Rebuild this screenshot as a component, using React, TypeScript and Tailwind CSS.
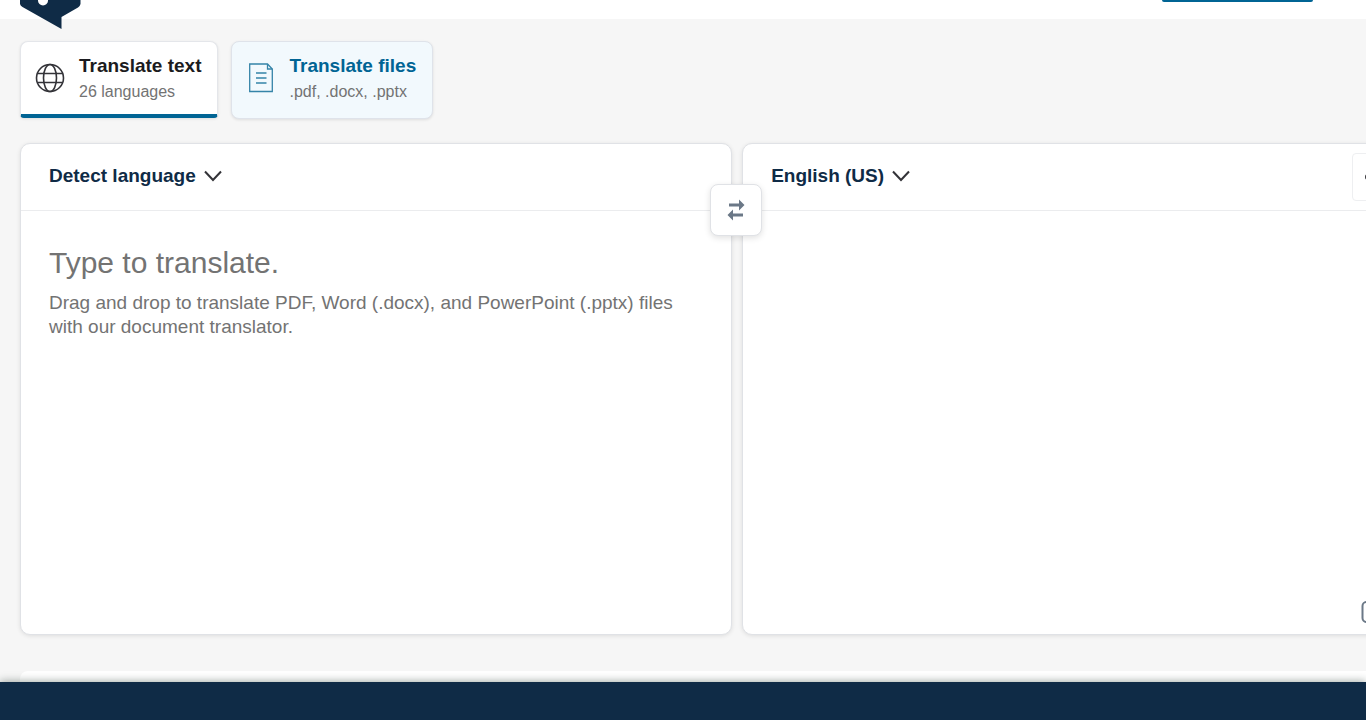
import type { ReactNode } from "react";

function Logo() {
  return (
    <a href="#home" aria-label="Home" className="block h-[30px] w-[62px]">
      <svg viewBox="0 0 62 30" width="62" height="30" aria-hidden="true">
        <path d="M0 0H60.500V4Q60 6 58 7.500L41.500 17V29L2.500 7Q0.500 6 0 4Z" fill="#0f2b46" />
        <circle cx="23" cy="0.500" r="5" fill="#fff" />
      </svg>
    </a>
  );
}

function GlobeIcon() {
  return (
    <svg width="30" height="30" viewBox="0 0 30 30" fill="none" stroke="#333338" strokeWidth="1.6" aria-hidden="true">
      <circle cx="15" cy="15" r="13.500" />
      <ellipse cx="15" cy="15" rx="6.500" ry="13.500" />
      <path d="M2.500 10.500H27.500M2.500 19.500H27.500" />
    </svg>
  );
}

function DocumentIcon() {
  return (
    <svg width="24" height="30" viewBox="0 0 24 30" fill="none" stroke="#3584a8" strokeWidth="1.3" aria-hidden="true">
      <path d="M0.700 1H18.500L23.300 6V28.500H0.700Z" />
      <path d="M18.500 1V6H23.300M7 10H17.500M7 15H17.500M7 20H17.500" />
    </svg>
  );
}

function Chevron() {
  return (
    <svg width="18" height="12" viewBox="0 0 18 12" fill="none" stroke="#333338" strokeWidth="2" aria-hidden="true">
      <path d="M1 1.500L9 10L17 1.500" />
    </svg>
  );
}

function SwapIcon() {
  return (
    <svg width="18" height="22" viewBox="0 0 18 22" fill="#6b7887" aria-hidden="true">
      <path d="M2 4.500H12V0.500L17.500 6L12 11.500V7.500H2Z" />
      <path d="M16 14.500H6V10.500L0.500 16L6 21.500V17.500H16Z" />
    </svg>
  );
}

function ModeTab({ icon, title, detail, active }: { icon: ReactNode; title: string; detail: string; active?: boolean }) {
  return (
    <button
      type="button"
      aria-pressed={!!active}
      className={`flex items-start border text-left shadow-[0_1px_3px_rgba(0,0,0,0.1)] ${
        active
          ? "h-[77px] rounded-t-lg rounded-b-sm border-[#e4e6ea] border-b-4 border-b-[#006494] bg-white pr-[15px] pl-[14px]"
          : "h-[78px] rounded-lg border-[#dfe3ea] bg-[#f2f9fd] pr-4 pl-[17px]"
      }`}
    >
      <span className={`mt-[21px] ${active ? "mr-[14px]" : "mr-[17px]"}`}>{icon}</span>
      <span className="mt-[11px] block">
        <span className={`block text-[19px] leading-[26px] font-bold ${active ? "text-[#1b1b20]" : "text-[#006494]"}`}>{title}</span>
        <span className="block text-[16px] leading-[26px] text-[#737373]">{detail}</span>
      </span>
    </button>
  );
}

function LanguageButton({ label }: { label: string }) {
  return (
    <button type="button" aria-haspopup="listbox" className="flex items-center gap-2 pb-[2px] text-[19px] leading-6 font-bold text-[#0f2b46]">
      {label}
      <Chevron />
    </button>
  );
}

const panel = "flex h-[492px] min-w-0 flex-col rounded-[10px] border border-[#e0e2e6] bg-white shadow-[0_1px_4px_rgba(0,0,0,0.1)]";
const panelHeader = "flex h-[67px] shrink-0 items-center border-b border-[#ebecee] pl-7";

export default function App() {
  return (
    <div className="flex h-screen flex-col overflow-hidden bg-[#f6f6f6] font-['Liberation_Sans',Arial,sans-serif]">
      <header className="relative flex h-[19px] shrink-0 items-start justify-between bg-white pr-[53px] pl-5">
        <Logo />
        <a href="#trial" aria-label="Start free trial" className="h-[2px] w-[151px] rounded-b-sm bg-[#006494]" />
      </header>

      <main className="flex min-h-0 flex-1 flex-col pt-[22px] pl-5">
        <nav aria-label="Translation modes" className="flex shrink-0 items-start gap-[13px]">
          <ModeTab active icon={<GlobeIcon />} title="Translate text" detail="26 languages" />
          <ModeTab icon={<DocumentIcon />} title="Translate files" detail=".pdf, .docx, .pptx" />
        </nav>

        <div className="relative mt-6 grid w-[105vw] shrink-0 grid-cols-2 gap-[10px]">
          <section className={panel}>
            <div className={panelHeader}>
              <LanguageButton label="Detect language" />
            </div>
            <label htmlFor="source" className="block px-7 pt-8 text-[#737373]">
              <span className="block text-[30px] leading-10">Type to translate.</span>
              <span className="mt-2 block max-w-[640px] text-[19px] leading-6">
                Drag and drop to translate PDF, Word (.docx), and PowerPoint (.pptx) files with our document translator.
              </span>
            </label>
            <textarea id="source" className="mx-7 min-h-0 flex-1 resize-none bg-transparent text-2xl outline-none" />
          </section>

          <section className={panel}>
            <div className={panelHeader}>
              <LanguageButton label="English (US)" />
              <button type="button" aria-label="Options" className="mr-2 ml-auto flex h-12 w-[93px] items-center rounded-sm border border-[#eeeff1] pl-3">
                <svg width="20" height="20" viewBox="0 0 20 20" fill="#333338" aria-hidden="true">
                  <circle cx="3" cy="10" r="3" />
                </svg>
              </button>
            </div>
            <textarea aria-label="Translation" readOnly className="mx-7 min-h-0 flex-1 resize-none bg-transparent text-2xl outline-none" />
            <div className="flex justify-end pr-[70px] pb-[11px]">
              <button type="button" aria-label="Copy" className="h-[22px] w-[22px]">
                <svg width="22" height="22" viewBox="0 0 22 22" fill="none" stroke="#6b7887" strokeWidth="2" aria-hidden="true">
                  <rect x="1.500" y="1" width="16" height="20" rx="4" />
                </svg>
              </button>
            </div>
          </section>

          <button
            type="button"
            aria-label="Swap languages"
            className="absolute top-[41px] left-1/2 -ml-[27px] flex h-[52px] w-[52px] items-center justify-center rounded-lg border border-[#e0e2e6] bg-white shadow-[0_2px_6px_rgba(0,0,0,0.12)]"
          >
            <SwapIcon />
          </button>
        </div>

        <section aria-label="Dictionary" className="mt-9 min-h-0 flex-1 rounded-tl-lg bg-white" />
      </main>

      <footer className="relative h-[38px] shrink-0 bg-[#0f2b46] shadow-[0_-1px_8px_rgba(30,50,40,0.4)]" />
    </div>
  );
}
